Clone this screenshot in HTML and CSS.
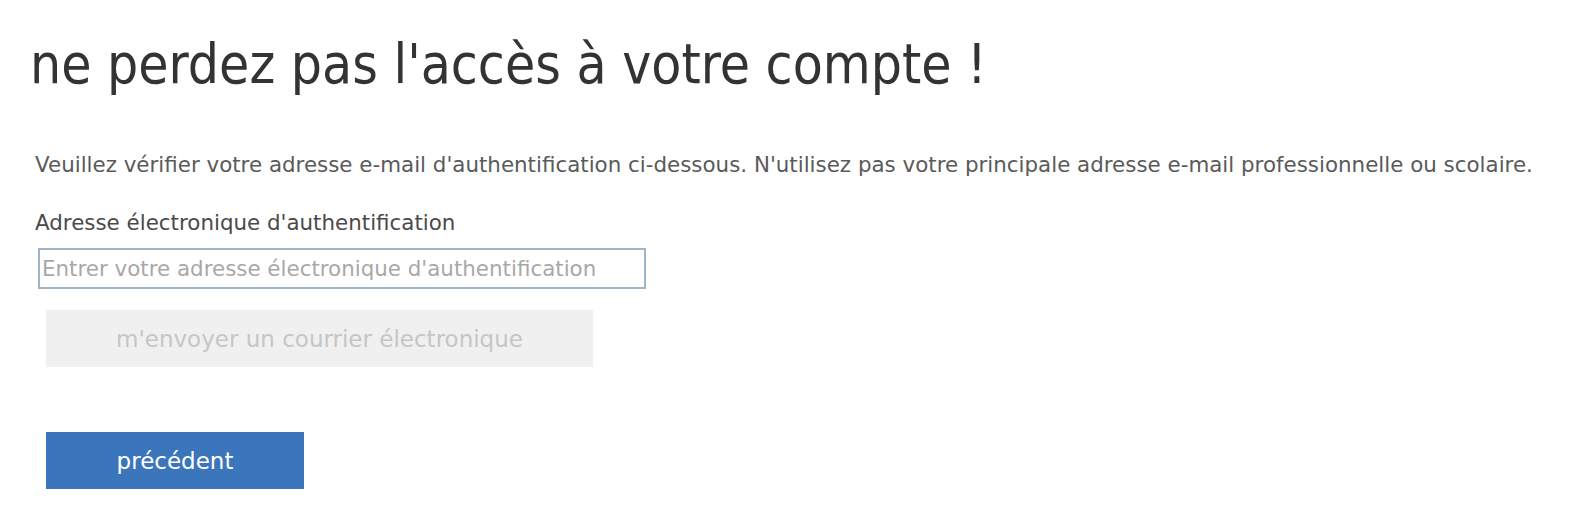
FILE: index.html
```html
<!DOCTYPE html>
<html lang="fr">
<head>
<meta charset="utf-8">
<title>Vérification</title>
<link rel="stylesheet" href="styles.css">
</head>
<body>
<main class="page">
  <h1 class="title">ne perdez pas l'accès à votre compte !</h1>
  <p class="intro">Veuillez vérifier votre adresse e-mail d'authentification ci-dessous. N'utilisez pas votre principale adresse e-mail professionnelle ou scolaire.</p>
  <label class="label" for="email">Adresse électronique d'authentification</label>
  <input class="field" id="email" type="email" placeholder="Entrer votre adresse électronique d'authentification" autofocus>
  <button class="btn btn-disabled" type="button" disabled>m'envoyer un courrier électronique</button>
  <button class="btn btn-primary" type="button">précédent</button>
</main>
</body>
</html>
```

FILE: styles.css
```css
* { box-sizing: border-box; }
html, body { margin: 0; padding: 0; background: #fff; }
body {
  font-family: "DejaVu Sans", "Liberation Sans", sans-serif;
  color: #333;
}
.page {
  display: flex;
  flex-direction: column;
  align-items: flex-start;
  padding: 31px 0 0 30px;
}
.title {
  margin: 0;
  font-family: "DejaVu Sans Condensed", "DejaVu Sans", sans-serif;
  font-size: 54.7px;
  line-height: 66px;
  font-weight: normal;
  color: #333;
}
.intro {
  margin: 56px 0 0 5px;
  font-size: 21.4px;
  line-height: 24px;
  color: #5a5a5a;
}
.label {
  margin: 34px 0 0 5px;
  font-size: 21.4px;
  line-height: 24px;
  color: #4a4a4a;
}
.field {
  margin: 13px 0 0 8px;
  width: 608px;
  height: 41px;
  border: 2px solid #a0b4c8;
  padding: 0 2px;
  font-family: inherit;
  font-size: 21.4px;
  color: #333;
  caret-color: #333;
  outline: none;
}
.field::placeholder { color: #a8a8a8; }
.btn {
  margin-left: 16px;
  border: none;
  font-family: inherit;
  font-size: 23px;
  height: 57px;
  padding: 0;
}
.btn-disabled {
  margin-top: 21px;
  width: 547px;
  background: #f0f0f0;
  color: #c6c6c6;
}
.btn-primary {
  margin-top: 65px;
  width: 258px;
  background: #3b75bb;
  color: #fff;
}
```
